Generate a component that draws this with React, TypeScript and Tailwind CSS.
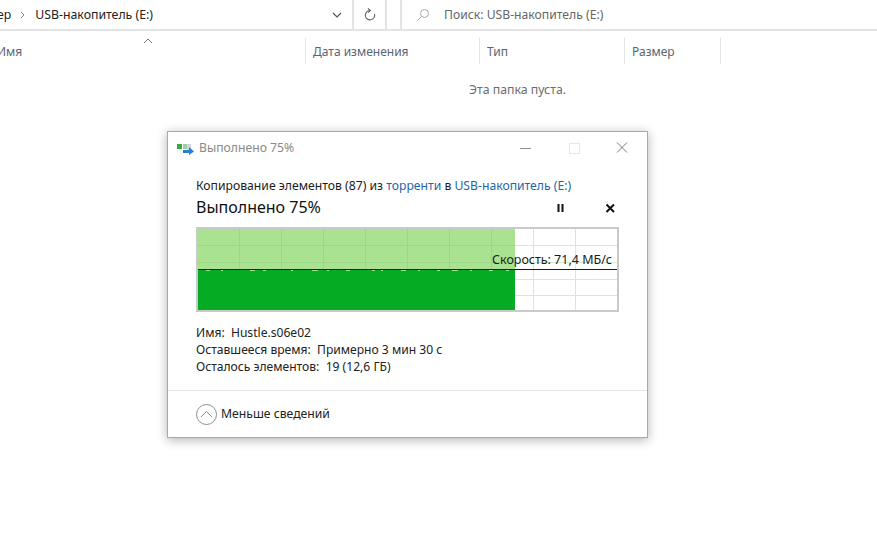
const font = "font-['Noto_Sans','Open_Sans',sans-serif]";

const columns = [
  { label: "Дата изменения", width: "w-[174px]" },
  { label: "Тип", width: "w-[145px]" },
  { label: "Размер", width: "w-[96px]" },
];

// light gaps under the speed line, uneven like the real graph
const specks = [
  [206, 4], [221, 2], [250, 5], [263, 3], [291, 2], [312, 6], [327, 2], [346, 4],
  [372, 3], [381, 2], [401, 5], [418, 2], [437, 3], [452, 6], [470, 2], [489, 4], [506, 3],
];

const SpeedChart = () => {
  const verticals = [239, 281, 323, 365, 407, 449, 491, 533, 575];
  const horizontals = [245, 262, 279, 295];
  return (
    <div className="relative w-[423px] h-[85px] border-2 border-[#c9c9c9] bg-white">
      <svg width="419" height="81" viewBox="198 229 419 81" className="block">
        <rect x="198" y="229" width="317" height="81" fill="#a9e290" />
        <rect x="198" y="270" width="317" height="40" fill="#06ab24" />
        {horizontals.map((y) => (
          <g key={y}>
            <line x1="198" x2="515" y1={y + 0.5} y2={y + 0.5} stroke="#9ad883" opacity={y > 270 ? 0 : 1} />
            <line x1="515" x2="617" y1={y + 0.5} y2={y + 0.5} stroke="#cfeccf" />
          </g>
        ))}
        {verticals.map((x) =>
          x < 515 ? (
            <line key={x} x1={x + 0.5} x2={x + 0.5} y1="229" y2="269" stroke="#9ad883" />
          ) : (
            <line key={x} x1={x + 0.5} x2={x + 0.5} y1="229" y2="310" stroke="#cfeccf" />
          )
        )}
        <line x1="198" x2="617" y1="269.5" y2="269.5" stroke="#1a1a1a" strokeWidth="1.2" />
        {specks.map(([x, w]) => (
          <rect key={x} x={x} y="270" width={w} height="1" fill="#a9e290" />
        ))}
      </svg>
      <span className="absolute right-[5px] top-[22px] text-[12.5px] leading-[18px] text-[#1c1c1c] whitespace-nowrap">
        Скорость: 71,4 МБ/с
      </span>
    </div>
  );
};

const CopyIcon = () => (
  <svg width="18" height="14" viewBox="0 0 18 14" className="shrink-0">
    <rect x="0" y="3" width="5" height="5" fill="#3aa845" />
    <rect x="6" y="3" width="4" height="5" fill="#9ccf9f" />
    <rect x="10" y="3" width="4" height="6" fill="#cfd8e0" />
    <path d="M6 9h6V6l5 4.500-5 3.500V12H6z" fill="#2a7fd0" />
  </svg>
);

const CopyDialog = () => (
  <div className="ml-[167px] mt-[32px] w-[481px] h-[307px] flex flex-col bg-white border border-[#a8a8a8] shadow-[0_2px_10px_rgba(0,0,0,0.3)]">
    <div className="h-[31px] flex items-center pl-[9px] pr-[18px]">
      <CopyIcon />
      <span className="ml-[4px] pt-[1px] text-[12.2px] text-[#8a8a8a]">Выполнено 75%</span>
      <svg width="120" height="14" viewBox="0 0 120 14" className="ml-auto">
        <line x1="11" x2="22" y1="7.500" y2="7.500" stroke="#8f8f8f" />
        <rect x="60.500" y="2.500" width="10" height="10" fill="none" stroke="#e6e6e6" />
        <path d="M108 1.500l10 10M118 1.500l-10 10" stroke="#7a7a7a" fill="none" />
      </svg>
    </div>
    <div className="pl-[28px] pr-[28px] pt-[14px]">
      <p className="text-[12.2px] leading-[18px] text-[#1c1c1c] whitespace-nowrap">
        Копирование элементов (87) из <span className="text-[#1f66a8]">торренти</span> в{" "}
        <span className="text-[#1f66a8]">USB-накопитель (E:)</span>
      </p>
      <div className="flex items-center h-[24px]">
        <span className="text-[16px] text-[#111]">Выполнено 75%</span>
        <svg width="58" height="12" viewBox="0 0 58 12" className="ml-auto mr-[4px] mt-[2px]">
          <path d="M1.500 2v8M5.500 2v8" stroke="#111" strokeWidth="2" />
          <path d="M49.500 2.500l7.500 7.500M57 2.500l-7.500 7.500" stroke="#111" strokeWidth="2" />
        </svg>
      </div>
      <div className="mt-[8px]">
        <SpeedChart />
      </div>
      <div className="mt-[12px] text-[12.1px] leading-[17px] text-[#222] whitespace-nowrap">
        <p>Имя:&nbsp; Hustle.s06e02</p>
        <p>Оставшееся время:&nbsp; Примерно 3 мин 30 с</p>
        <p>Осталось элементов:&nbsp; 19 (12,6 ГБ)</p>
      </div>
    </div>
    <div className="mt-auto h-[47px] border-t border-[#e4e4e4] flex items-center pl-[28px]">
      <div className="w-[21px] h-[21px] rounded-full border border-[#8d8d8d] flex items-center justify-center">
        <svg width="13" height="8" viewBox="0 0 13 8">
          <path d="M1 7l5.500-5.500L12 7" fill="none" stroke="#8d8d8d" />
        </svg>
      </div>
      <span className="ml-[4px] pt-[1px] text-[12.2px] text-[#222]">Меньше сведений</span>
    </div>
  </div>
);

export default function App() {
  return (
    <div className={`${font} w-[877px] h-[549px] overflow-hidden bg-white`}>
      <div className="flex h-[31px] border-b-2 border-[#e3e3e3]">
        <div className="w-[389px] flex items-center -ml-[2px] border-r-2 border-[#e3e3e3]">
          <span className="text-[12.3px] pt-[1px] text-[#222] -ml-[1px]">ер</span>
          <svg width="6" height="8" viewBox="0 0 6 8" className="ml-[9px]">
            <path d="M1 1l3 3-3 3" fill="none" stroke="#8a8a8a" />
          </svg>
          <span className="ml-[9px] pt-[1px] text-[12.3px] text-[#222]">USB-накопитель (E:)</span>
          <svg width="10" height="6" viewBox="0 0 10 6" className="ml-auto mr-[10px]">
            <path d="M1 1l4 4 4-4" fill="none" stroke="#555" strokeWidth="1.2" />
          </svg>
          <div className="h-full w-[33px] border-l-2 border-[#e3e3e3] flex items-center justify-center">
            <svg width="14" height="14" viewBox="0 0 14 14">
              <path d="M7 2.500a4.700 4.700 0 1 0 4.500 3.300" fill="none" stroke="#666" strokeWidth="1.1" />
              <path d="M5 .5l2.500 2-2.500 2" fill="none" stroke="#666" strokeWidth="1.1" />
            </svg>
          </div>
        </div>
        <div className="ml-[13px] flex-1 flex items-center border-l-2 border-[#e3e3e3] pl-[14px]">
          <svg width="14" height="14" viewBox="0 0 14 14">
            <circle cx="8.500" cy="5.500" r="4" fill="none" stroke="#a8a8a8" />
            <path d="M5.500 8.500L1.500 12.500" stroke="#a8a8a8" />
          </svg>
          <span className="ml-[14px] pt-[1px] text-[12.2px] text-[#666]">Поиск: USB-накопитель (E:)</span>
        </div>
      </div>
      <div className="relative flex h-[35px] pt-[7px]">
        <svg width="10" height="6" viewBox="0 0 10 6" className="absolute left-[143px] top-[7px]">
          <path d="M1 5l4-4 4 4" fill="none" stroke="#777" />
        </svg>
        <div className="w-[308px] h-[26px] flex items-center -ml-[3px] pt-[2px] text-[12px] text-[#5a6470]">
          <span>Имя</span>
        </div>
        {columns.map((c) => (
          <div
            key={c.label}
            className={`${c.width} h-[26px] flex items-center pl-[7px] pt-[2px] border-l border-[#e5e5e5] text-[12px] text-[#5a6470]`}
          >
            {c.label}
          </div>
        ))}
        <div className="h-[26px] border-l border-[#e5e5e5]" />
      </div>
      <p className="mt-[15px] ml-[469px] text-[12.3px] leading-[18px] text-[#6d6d6d]">Эта папка пуста.</p>
      <CopyDialog />
    </div>
  );
}
